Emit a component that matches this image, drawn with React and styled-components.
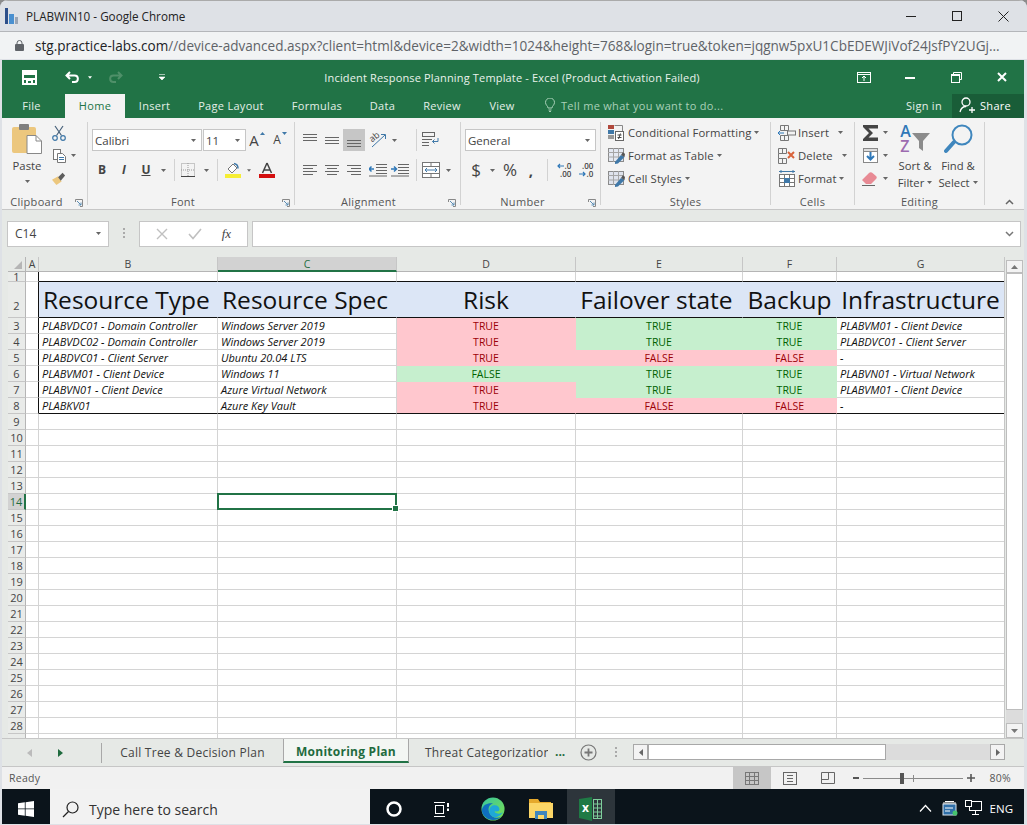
import React from 'react';
import styled, { createGlobalStyle } from 'styled-components';

const GREEN = '#217346';
const UI_FONT = '"Open Sans", "Noto Sans", sans-serif';

const GlobalStyle = createGlobalStyle`
  html, body { margin: 0; padding: 0; background: #8c8c8c; }
  body { width: 1027px; height: 825px; overflow: hidden; font-family: ${UI_FONT}; }
  * { box-sizing: border-box; }
`;

const Page = styled.div`
  width: 1027px;
  height: 825px;
  display: flex;
  flex-direction: column;
  overflow: hidden;
  border-radius: 8px 8px 0 0;
  background: #dee1e6;
`;

/* ── Chrome window ── */
const TitleBar = styled.div`
  height: 32px;
  flex: none;
  display: flex;
  align-items: center;
  padding: 0 1px 0 5px;
  background: #dee1e6;
  border-top: 1px solid #aaa;
  border-bottom: 1px solid #b4b6ba;
  color: #222;
  font-size: 11.7px;
  font-family: "Open Sans", sans-serif;
`;
const TitleText = styled.span`
  margin-left: 7px;
  flex: 1;
`;
const WinButton = styled.span`
  width: 46px;
  height: 30px;
  display: flex;
  align-items: center;
  justify-content: center;
`;
const UrlBar = styled.div`
  height: 27px;
  flex: none;
  display: flex;
  align-items: center;
  padding-left: 15px;
  gap: 11px;
  background: #f1f3f4;
  color: #5f6368;
  font-size: 13.55px;
  white-space: nowrap;
  overflow: hidden;
  b { font-weight: 400; color: #202124; }
`;

const ExcelFrame = styled.div`
  flex: none;
  height: 729px;
  margin: 1px 3px 0 2px;
  display: flex;
  flex-direction: column;
  background: #f3f3f3;
`;

/* ── Excel title + tabs ── */
const QatBar = styled.div`
  height: 34px;
  flex: none;
  display: flex;
  align-items: center;
  position: relative;
  background: ${GREEN};
  color: #fff;
`;
const QatSlot = styled.span`
  width: ${p => p.$w}px;
  flex: none;
  display: flex;
  align-items: center;
  justify-content: center;
`;
const DocTitle = styled.span`
  position: absolute;
  left: -2px;
  right: 0;
  top: 10px;
  text-align: center;
  font-size: 11px;
  letter-spacing: 0.16px;
  color: #e9f2ec;
  pointer-events: none;
`;
const TabBar = styled.div`
  height: 24px;
  flex: none;
  display: flex;
  align-items: stretch;
  background: ${GREEN};
  color: #e4efe8;
  font-size: 11px;
  letter-spacing: 0.3px;
`;
const RibbonTab = styled.span`
  width: ${p => p.$w}px;
  flex: none;
  display: flex;
  align-items: center;
  justify-content: center;
  padding-bottom: 2px;
  background: ${p => (p.$active ? '#f3f3f3' : 'transparent')};
  color: ${p => (p.$active ? GREEN : 'inherit')};
`;
const TellMe = styled.span`
  display: flex;
  align-items: center;
  gap: 6px;
  margin-left: 16px;
  padding-bottom: 2px;
  color: #a9d0b8;
`;
const SignIn = styled.span`
  margin-left: auto;
  margin-right: 10px;
  padding-bottom: 2px;
  align-self: center;
`;
const ShareBox = styled.span`
  width: 72px;
  display: flex;
  align-items: center;
  gap: 4px;
  padding: 0 0 2px 7px;
  background: #195d38;
  color: #fff;
`;

/* ── Ribbon ── */
const Ribbon = styled.div`
  height: 92px;
  flex: none;
  display: flex;
  padding-top: 4px;
  background: #f3f3f3;
  border-bottom: 1px solid #c6c6c6;
  color: #444;
  font-size: 11.3px;
  position: relative;
`;
const Group = styled.div`
  width: ${p => p.$w}px;
  height: 83px;
  flex: none;
  display: flex;
  flex-direction: column;
  border-right: 1px solid #d2d2d2;
  position: relative;
`;
const GroupBody = styled.div`
  flex: 1;
  display: flex;
  flex-direction: ${p => (p.$row ? 'row' : 'column')};
  padding: ${p => p.$pad || '7px 0 0 0'};
  gap: ${p => p.$gap || 0}px;
  min-height: 0;
  margin-top: ${p => (p.$pad ? -1 : 0)}px;
`;
const GroupLabel = styled.div`
  height: 16px;
  margin-bottom: -5px;
  text-align: center;
  line-height: 16px;
  font-size: 11px;
  letter-spacing: 0.3px;
  color: #555;
  padding-right: ${p => p.$shift || 0}px;
`;
const Launcher = styled.svg`
  position: absolute;
  right: 4px;
  bottom: -2px;
`;
const ToolRow = styled.div`
  height: ${p => p.$h || 22}px;
  flex: none;
  display: flex;
  align-items: center;
  padding-left: ${p => p.$left || 0}px;
  white-space: nowrap;
`;
const Slot = styled.span`
  width: ${p => p.$w}px;
  height: 22px;
  flex: none;
  display: flex;
  align-items: center;
  justify-content: center;
  background: ${p => (p.$active ? '#c6c6c6' : 'transparent')};
`;
const Combo = styled.span`
  width: ${p => p.$w}px;
  height: 22px;
  flex: none;
  display: flex;
  align-items: center;
  justify-content: space-between;
  padding: 0 5px 0 2px;
  margin-right: ${p => p.$gap || 0}px;
  background: #fff;
  border: 1px solid #c6c6c6;
  font-size: 11.5px;
`;
const VSep = styled.span`
  width: 1px;
  height: 22px;
  background: #d2d2d2;
`;
const ToolText = styled.span`
  margin: 0 ${p => p.$after || 3}px 0 ${p => p.$before || 2}px;
  letter-spacing: 0.1px;
`;
const Column = styled.div`
  width: ${p => p.$w}px;
  flex: none;
  display: flex;
  flex-direction: column;
  align-items: ${p => p.$align || 'center'};
`;
const BigIcon = styled.div`
  height: ${p => p.$h}px;
  display: flex;
  align-items: center;
  justify-content: center;
`;
const StackLine = styled.div`
  height: 17px;
  line-height: 17px;
  display: flex;
  align-items: center;
  gap: 3px;
  white-space: nowrap;
`;
const Collapse = styled.svg`
  position: absolute;
  left: 1003px;
  top: 81px;
`;
const GrowLetter = styled.span`
  display: inline-flex;
  align-items: flex-start;
  gap: 1px;
  font-size: ${p => p.$size}px;
  line-height: 16px;
`;
const SymbolText = styled.span`
  font-size: ${p => p.$size}px;
  font-weight: ${p => p.$weight || 400};
  line-height: 22px;
`;
const OrientWrap = styled.span`
  position: relative;
  width: 18px;
  height: 16px;
  display: block;
`;
const OrientText = styled.span`
  position: absolute;
  left: 0;
  top: 0;
  font-size: 9px;
  line-height: 10px;
  transform: rotate(-38deg);
`;
const DecimalStack = styled.span`
  display: flex;
  flex-direction: column;
  align-items: flex-end;
  font-size: 8px;
  line-height: 8px;
  font-weight: 600;
`;
const DecimalLine = styled.span`
  display: flex;
  align-items: center;
  gap: 1px;
`;
const SortWrap = styled.span`
  display: flex;
  align-items: flex-start;
`;
const SortLetters = styled.span`
  display: flex;
  flex-direction: column;
  font-size: 16px;
  line-height: 15px;
  font-weight: 600;
  color: #2f78b8;
  i { font-style: normal; color: #9c6bb0; }
`;
const SortFunnel = styled.svg`
  margin-top: 7px;
`;

/* ── Formula bar ── */
const FormulaBar = styled.div`
  height: 47px;
  flex: none;
  display: flex;
  align-items: center;
  padding: 0 3px 0 5px;
  background: #e6e9e6;
  font-size: 12px;
  color: #444;
`;
const NameBox = styled.div`
  width: 102px;
  height: 26px;
  display: flex;
  align-items: center;
  justify-content: space-between;
  padding: 0 7px;
  background: #fff;
  border: 1px solid #c6c6c6;
`;
const Grip = styled.div`
  width: 30px;
  display: flex;
  justify-content: center;
`;
const FxBox = styled.div`
  width: 109px;
  height: 26px;
  margin-right: 4px;
  display: flex;
  align-items: center;
  justify-content: space-around;
  padding: 0 6px;
  background: #fff;
  border: 1px solid #c6c6c6;
`;
const FxLabel = styled.i`
  font-family: "Liberation Serif", serif;
  font-size: 13px;
`;
const FormulaInput = styled.div`
  flex: 1;
  height: 26px;
  display: flex;
  align-items: center;
  justify-content: flex-end;
  padding-right: 6px;
  background: #fff;
  border: 1px solid #c6c6c6;
`;

/* ── Sheet grid ── */
const SheetArea = styled.div`
  flex: 1;
  min-height: 0;
  display: flex;
  padding-left: 6px;
  background: #e6e9e6;
  border-bottom: 1px solid #c6c6c6;
`;
const Grid = styled.div`
  width: 997px;
  flex: none;
  display: grid;
  grid-template-columns: 18px 13px 179px 179px 179px 167px 94px 168px;
  grid-template-rows: 15px 10px 36px repeat(27, 16px);
  overflow: hidden;
  background: #fff;
  border-right: 1px solid #c6c6c6;
  align-content: start;
`;
const Corner = styled.div`
  background: #e6e9e6;
  border-right: 1px solid #b5b5b5;
  border-bottom: 1px solid #b5b5b5;
  display: flex;
  align-items: flex-end;
  justify-content: flex-end;
  padding: 0 3px 2px 0;
`;
const ColHead = styled.div`
  display: flex;
  align-items: center;
  justify-content: center;
  font-size: 10.5px;
  color: ${p => (p.$selected ? '#1f6b3e' : '#444')};
  background: ${p => (p.$selected ? '#d2d2d2' : '#e6e9e6')};
  border-right: 1px solid #c6c6c6;
  border-bottom: ${p => (p.$selected ? `2px solid ${GREEN}` : '1px solid #b5b5b5')};
`;
const RowHead = styled.div`
  display: flex;
  align-items: ${p => (p.$tall ? 'flex-end' : 'center')};
  justify-content: center;
  padding-bottom: ${p => (p.$tall ? 5 : 0)}px;
  overflow: hidden;
  font-size: 11px;
  line-height: 12px;
  color: ${p => (p.$selected ? '#1f6b3e' : '#444')};
  background: ${p => (p.$selected ? '#d2d2d2' : '#e9ebe9')};
  border-right: ${p => (p.$selected ? `2px solid ${GREEN}` : '1px solid #b5b5b5')};
  border-bottom: 1px solid #c6c6c6;
`;
const Cell = styled.div`
  position: relative;
  display: flex;
  align-items: center;
  min-width: 0;
  white-space: nowrap;
  padding-left: 3px;
  background: ${p => p.$bg || '#fff'};
  border-right: 1px solid ${p => (p.$bg ? p.$bg : p.$rightBlack ? '#111' : '#d4d4d4')};
  border-bottom: 1px solid ${p => (p.$bottomBlack ? '#111' : p.$bg || '#d4d4d4')};
`;
const HeaderCell = styled(Cell)`
  justify-content: ${p => (p.$center ? 'center' : 'flex-start')};
  padding-left: ${p => (p.$center ? 0 : 4)}px;
  padding-right: ${p => p.$nudge || 0}px;
  font-family: "Open Sans", sans-serif;
  font-size: 24.5px;
  color: #111;
`;
const DataText = styled.span`
  font-family: "Open Sans", sans-serif;
  font-style: italic;
  font-size: 11px;
  color: #111;
`;
const BoolCell = styled(Cell)`
  justify-content: center;
  padding-left: 0;
  font-size: 10.5px;
  color: ${p => p.$fg};
`;
const SelectedCell = styled(Cell)`
  &::before {
    content: '';
    position: absolute;
    inset: -1px;
    border: 2px solid ${GREEN};
    z-index: 2;
  }
  &::after {
    content: '';
    position: absolute;
    right: -3px;
    bottom: -3px;
    width: 5px;
    height: 5px;
    background: ${GREEN};
    border: 1px solid #fff;
    z-index: 3;
  }
`;
const VScroll = styled.div`
  width: 17px;
  margin: 3px 0 0 1px;
  display: flex;
  flex-direction: column;
  background: #dcdcdc;
`;
const ScrollButton = styled.div`
  height: ${p => p.$h}px;
  flex: none;
  display: flex;
  align-items: center;
  justify-content: center;
  background: #f3f3f3;
  border: 1px solid #bdbdbd;
`;
const VThumb = styled.div`
  height: 437px;
  flex: none;
  background: #fff;
  border: 1px solid #bdbdbd;
`;
const VTrack = styled.div`
  flex: 1;
`;

/* ── Sheet tabs ── */
const SheetTabs = styled.div`
  height: 28px;
  flex: none;
  display: flex;
  align-items: stretch;
  background: #e6e9e6;
  border-bottom: 1px solid #c6c6c6;
  font-size: 12px;
  color: #444;
  letter-spacing: 0.25px;
`;
const TabNav = styled.div`
  width: 100px;
  flex: none;
  display: flex;
  align-items: center;
  padding-left: 25px;
  gap: 26px;
`;
const NavRule = styled.span`
  width: 1px;
  height: 20px;
  margin-left: auto;
  background: #a8a8a8;
`;
const SheetTab = styled.div`
  width: ${p => p.$w}px;
  height: 24px;
  flex: none;
  overflow: hidden;
  white-space: nowrap;
  display: flex;
  align-items: center;
  justify-content: ${p => (p.$clip ? 'flex-start' : 'center')};
  padding-left: ${p => (p.$clip ? 16 : 0)}px;
  padding-top: 3px;
  font-weight: ${p => (p.$active ? 700 : 400)};
  color: ${p => (p.$active ? '#1f6b3e' : '#444')};
  background: ${p => (p.$active ? '#f3f6f3' : 'transparent')};
  border-left: ${p => (p.$active ? '1px solid #a8a8a8' : '0')};
  border-right: ${p => (p.$active ? '1px solid #a8a8a8' : '0')};
  border-bottom: ${p => (p.$active ? `2px solid ${GREEN}` : '0')};
`;
const MoreTabs = styled.span`
  width: 22px;
  flex: none;
  align-self: center;
  margin-top: -3px;
  padding-left: 7px;
  color: #1f6b3e;
  font-weight: 700;
  letter-spacing: 0;
`;
const HScroll = styled.div`
  width: 372px;
  height: 16px;
  flex: none;
  align-self: center;
  margin: -1px 0 0 7px;
  display: flex;
  background: #dcdcdc;
`;
const HButton = styled.div`
  width: 15px;
  flex: none;
  display: flex;
  align-items: center;
  justify-content: center;
  background: #f3f3f3;
  border: 1px solid #a8a8a8;
`;
const HThumb = styled.div`
  width: 238px;
  flex: none;
  background: #fff;
  border: 1px solid #a8a8a8;
`;
const HTrack = styled.div`
  flex: 1;
`;

/* ── Status bar ── */
const StatusBar = styled.div`
  height: 22px;
  flex: none;
  display: flex;
  align-items: center;
  padding-left: 7px;
  background: #f1f1f1;
  font-size: 10.5px;
  letter-spacing: 0.3px;
  color: #555;
`;
const ViewButton = styled.span`
  width: 38px;
  height: 100%;
  flex: none;
  display: flex;
  align-items: center;
  justify-content: center;
  background: ${p => (p.$active ? '#c6c6c6' : 'transparent')};
`;
const ZoomTrack = styled.span`
  width: 100px;
  height: 1px;
  margin: 0 4px 0 3px;
  position: relative;
  background: #8a8a8a;
`;
const ZoomThumb = styled.span`
  position: absolute;
  left: 37px;
  top: -5px;
  width: 4px;
  height: 11px;
  background: #555;
`;
const ZoomTick = styled.span`
  position: absolute;
  left: 50px;
  top: -3px;
  width: 1px;
  height: 7px;
  background: #8a8a8a;
`;

/* ── Taskbar ── */
const Taskbar = styled.div`
  height: 35px;
  flex: none;
  margin: 0 3px 0 2px;
  display: flex;
  align-items: stretch;
  background: #0b141b;
  color: #fff;
`;
const TaskSlot = styled.span`
  width: ${p => p.$w}px;
  flex: none;
  display: flex;
  align-items: center;
  justify-content: center;
  padding-top: 5px;
  background: ${p => (p.$active ? '#2d353b' : 'transparent')};
`;
const SearchBox = styled.div`
  width: 320px;
  flex: none;
  display: flex;
  align-items: center;
  gap: 10px;
  padding: 5px 0 0 12px;
  background: #f2f2f2;
  color: #333;
  font-size: 14px;
`;
const Tray = styled.span`
  margin-left: auto;
  display: flex;
  align-items: center;
  padding: 3px 11px 0 0;
  font-size: 11.5px;
`;
const LogoWrap = styled.span`
  position: relative;
  width: 24px;
  height: 24px;
  display: block;
`;
const LogoLetter = styled.span`
  position: absolute;
  left: 3px;
  top: 3px;
  font-size: 12px;
  line-height: 16px;
  font-weight: 700;
  color: #fff;
`;

/* ── Small drawings ── */
const Caret = ({ color = '#666' }) => (
  <svg width="5" height="3" viewBox="0 0 5 3"><path d="M0 0h5L2.500 3z" fill={color} /></svg>
);
const Lines = ({ rows, color = '#666' }) => (
  <svg width="16" height="14" viewBox="0 0 16 14" fill="none" stroke={color}>
    {rows.map(([x1, x2, y]) => <path key={y} d={`M${x1} ${y}.5H${x2}`} />)}
  </svg>
);
const LauncherIcon = () => (
  <Launcher width="8" height="8" viewBox="0 0 8 8" fill="none" stroke="#888">
    <path d="M0.500 3V0.500H7.500V7.500H5" />
    <path d="M2 2L6 6M6 3.500V6H3.500" stroke="#5b8db5" />
  </Launcher>
);
const SaveIcon = () => (
  <svg width="15" height="15" viewBox="0 0 15 15">
    <path d="M0 0H15V15H0z" fill="#fff" />
    <rect x="2" y="5" width="11" height="3" fill="#217346" />
    <rect x="2" y="10" width="2" height="3" fill="#217346" />
    <rect x="11" y="10" width="2" height="3" fill="#217346" />
    <rect x="6" y="11" width="3" height="2" fill="#217346" />
  </svg>
);
const PasteIcon = () => (
  <svg width="30" height="32" viewBox="0 0 30 32">
    <rect x="0" y="4" width="24" height="26" rx="2" fill="#ecc77e" />
    <rect x="7" y="1" width="10" height="6" rx="1" fill="#7f7f7f" />
    <path d="M15 12.500H24L29.500 18V30.500H15z" fill="#fff" stroke="#888" />
    <path d="M24 12.500V18H29.500" fill="none" stroke="#888" />
  </svg>
);
const CutIcon = () => (
  <svg width="14" height="16" viewBox="0 0 14 16" fill="none" stroke="#47617a" strokeWidth="1.200">
    <path d="M3 1L9.500 10.500M11 1L4.500 10.500" />
    <circle cx="3" cy="13" r="2.300" stroke="#3f78a8" />
    <circle cx="11" cy="13" r="2.300" stroke="#3f78a8" />
  </svg>
);
const CopyIcon = () => (
  <svg width="13" height="14" viewBox="0 0 13 14" fill="#fff" stroke="#777">
    <rect x="0.500" y="0.500" width="7" height="10" />
    <path d="M4.500 4.500H9.500L12.500 7.500V13.500H4.500z" />
    <path d="M6 8.500H11M6 10.500H11" fill="none" stroke="#3f78a8" />
  </svg>
);
const PainterIcon = () => (
  <svg width="16" height="15" viewBox="0 0 16 15">
    <path d="M0 9L7 5L11 11L5 15z" fill="#ecc77e" />
    <path d="M7 6L10 10L15 4L12 1z" fill="#5d5d5d" />
  </svg>
);
const GrowA = ({ size, down }) => (
  <GrowLetter $size={size}>
    A
    <svg width="5" height="3" viewBox="0 0 5 3">
      <path d={down ? 'M0 0H5L2.500 3z' : 'M0 3L2.500 0L5 3z'} fill="#3f78a8" />
    </svg>
  </GrowLetter>
);
const BordersIcon = () => (
  <svg width="14" height="14" viewBox="0 0 14 14" fill="none" stroke="#999" strokeDasharray="1 1">
    <rect x="0.500" y="0.500" width="13" height="13" />
    <path d="M7 0V14M0 7H14" />
    <path d="M0 13.500H14" stroke="#444" strokeDasharray="none" />
  </svg>
);
const FillIcon = () => (
  <svg width="16" height="16" viewBox="0 0 16 16">
    <path d="M3 7L8 2L12 6L7 11z" fill="#fff" stroke="#777" />
    <path d="M9 1.500C12 2 13 4 13 6.500" fill="none" stroke="#3f78a8" strokeWidth="1.500" />
    <rect x="0" y="12" width="16" height="4" fill="#f6ee34" />
  </svg>
);
const FontColorIcon = () => (
  <svg width="16" height="16" viewBox="0 0 16 16">
    <path d="M8 1L3.500 11M8 1L12.500 11M5 8H11" stroke="#444" strokeWidth="1.500" fill="none" />
    <rect x="0" y="12" width="16" height="4" fill="#d40f0f" />
  </svg>
);
const OrientIcon = () => (
  <OrientWrap>
    <OrientText>ab</OrientText>
    <svg width="18" height="16" viewBox="0 0 18 16" fill="none" stroke="#3f78a8">
      <path d="M3 15L16 3M12 2.500H16.500V7" />
    </svg>
  </OrientWrap>
);
const WrapIcon = () => (
  <svg width="18" height="16" viewBox="0 0 18 16" fill="none" stroke="#666">
    <rect x="0.500" y="0.500" width="12" height="4" />
    <path d="M0 7.500H10M0 10.500H7M0 13.500H7" />
    <path d="M16 6V9.500H10.500M12.500 7.500L10.500 9.500L12.500 11.500" stroke="#3f78a8" />
  </svg>
);
const MergeIcon = () => (
  <svg width="18" height="16" viewBox="0 0 18 16" fill="#fff" stroke="#777">
    <rect x="0.500" y="0.500" width="17" height="15" />
    <path d="M0 4.500H18M0 11.500H18M9 0V4M9 12V16" />
    <path d="M3 8H15M5 6L3 8L5 10M13 6L15 8L13 10" fill="none" stroke="#3f78a8" />
  </svg>
);
const IndentIcon = ({ flip }) => (
  <svg width="18" height="14" viewBox="0 0 18 14" fill="none" stroke="#666">
    <path d="M7 1.500H18M7 4.500H18M7 7.500H18M7 10.500H18M0 13H18" />
    <path d={flip ? 'M0 6H5M3 3.500L5.500 6L3 8.500' : 'M5 6H0M2.500 3.500L0 6L2.500 8.500'} stroke="#2f78b8" strokeWidth="1.500" />
  </svg>
);
const DecimalArrow = ({ left }) => (
  <svg width="7" height="6" viewBox="0 0 7 6" fill="none" stroke="#2f78b8" strokeWidth="1.200">
    <path d={left ? 'M7 3H1M3 1L1 3L3 5' : 'M0 3H6M4 1L6 3L4 5'} />
  </svg>
);
const DecimalIcon = ({ left }) => (
  <DecimalStack>
    {left ? (
      <>
        <DecimalLine><DecimalArrow left />.0</DecimalLine>
        <DecimalLine>.00</DecimalLine>
      </>
    ) : (
      <>
        <DecimalLine>.00</DecimalLine>
        <DecimalLine><DecimalArrow />.0</DecimalLine>
      </>
    )}
  </DecimalStack>
);
const CondIcon = () => (
  <svg width="16" height="16" viewBox="0 0 16 16">
    <rect x="0" y="0" width="6" height="4" fill="#b0483c" />
    <rect x="0" y="5" width="6" height="4" fill="#3f78a8" />
    <rect x="0" y="10" width="6" height="4" fill="#999" />
    <path d="M6.500 0.500H14.500V6" fill="none" stroke="#888" />
    <rect x="7.500" y="6.500" width="8" height="9" fill="#fff" stroke="#666" />
    <path d="M9.500 10H13.500M9.500 12.500H13.500M12.500 8.500L10.500 14" stroke="#444" fill="none" />
  </svg>
);
const TableIcon = ({ fill }) => (
  <svg width="17" height="16" viewBox="0 0 17 16">
    <rect x="0.500" y="0.500" width="15" height="13" fill={fill} stroke="#8a8a8a" />
    <path d="M0 4.500H16M0 9H16M5.500 0V14M10.500 0V14" stroke="#a5a5a5" />
    <path d="M7 14L13 7L16.500 9L10 15.500L7 16z" fill="#3f78a8" />
    <path d="M13 7L15 4L17 6L16.500 9z" fill="#555" />
  </svg>
);
const InsertIcon = () => (
  <svg width="18" height="16" viewBox="0 0 18 16" fill="none" stroke="#777">
    <path d="M2.500 0.500H10.500V5.500H2.500zM6.500 0.500V5.500M2.500 10.500H10.500V15.500H2.500zM6.500 10.500V15.500" />
    <rect x="9.500" y="6" width="8" height="4" fill="#f3f3f3" />
    <path d="M0 8H6M4 6L6 8L4 10" stroke="#2f78b8" transform="rotate(180 3 8)" />
  </svg>
);
const DeleteIcon = () => (
  <svg width="18" height="16" viewBox="0 0 18 16" fill="none" stroke="#777">
    <path d="M0.500 0.500H8.500V5.500H0.500zM4.500 0.500V5.500M0.500 10.500H8.500V15.500H0.500zM4.500 10.500V15.500M0.500 5.500V10.500" />
    <path d="M10 4L16 10M16 4L10 10" stroke="#d8633a" strokeWidth="2" />
  </svg>
);
const FormatIcon = () => (
  <svg width="18" height="17" viewBox="0 0 18 17" fill="none" stroke="#777">
    <rect x="1.500" y="4.500" width="15" height="12" fill="#fff" />
    <path d="M1 8.500H17M1 12.500H17M6.500 4V17M11.500 4V17" />
    <rect x="6" y="8" width="6" height="5" fill="#3f78a8" stroke="none" />
    <path d="M1 1.500H17M3 0V3M15 0V3" stroke="#3f78a8" />
  </svg>
);
const SumIcon = () => (
  <svg width="17" height="16" viewBox="0 0 17 16">
    <path d="M1 0H16V3.500H6.500L11 8L6.500 12.500H16V16H1V14L7 8L1 2z" fill="#444" />
  </svg>
);
const FillDownIcon = () => (
  <svg width="15" height="15" viewBox="0 0 15 15">
    <rect x="0.500" y="0.500" width="14" height="14" fill="#fff" stroke="#888" />
    <rect x="0.500" y="0.500" width="14" height="3" fill="#ddd" stroke="#888" />
    <path d="M7.500 4V11M4 8L7.500 11.500L11 8" fill="none" stroke="#2f78b8" strokeWidth="2" />
  </svg>
);
const EraserIcon = () => (
  <svg width="16" height="14" viewBox="0 0 16 14">
    <path d="M0 8L7 1C8 0 9.500 0 10.500 1L14 4C15 5 15 6 14 7L9 12H4z" fill="#e88a94" />
    <path d="M0 13.500H13" stroke="#666" />
  </svg>
);
const SortIcon = () => (
  <SortWrap>
    <SortLetters>A<i>Z</i></SortLetters>
    <SortFunnel width="19" height="20" viewBox="0 0 19 20">
      <path d="M1 2H19L12 10V20L8 17V10z" fill="#8b8b8b" />
    </SortFunnel>
  </SortWrap>
);
const FindIcon = () => (
  <svg width="29" height="30" viewBox="0 0 29 30" fill="none" stroke="#3f86bd">
    <circle cx="18" cy="11" r="9.500" strokeWidth="2" />
    <path d="M10 18L2 27" strokeWidth="4" strokeLinecap="round" />
  </svg>
);
const EdgeIcon = () => (
  <svg width="24" height="24" viewBox="0 0 26 26">
    <defs>
      <linearGradient id="edgeTop" x1="0" y1="0" x2="1" y2="1">
        <stop offset="0" stopColor="#37c6a0" />
        <stop offset="1" stopColor="#7ce04c" />
      </linearGradient>
    </defs>
    <circle cx="13" cy="13" r="12.500" fill="url(#edgeTop)" />
    <path d="M1 14C2 8 8 6 13 7C9 8 7 12 9 17C11 22 17 24 22 21C18 26 9 26 5 22C2 19 1 17 1 14z" fill="#0f6ebd" />
    <path d="M9 15C9 11 12 9 15 9C18 9 20 11 20 13.500C20 15 18 16 15 15.500C14 17 18 19 22 17.500C24.500 16.500 25 14 25 13C24 19 18 23 13 21.500C10 20.500 9 18 9 15z" fill="#1fa8d8" />
  </svg>
);
const FolderIcon = () => (
  <svg width="24" height="20" viewBox="0 0 24 20">
    <path d="M0 0H9L11 3H22V19H0z" fill="#e5a92c" />
    <rect x="0" y="4" width="24" height="15" fill="#fbd667" />
    <rect x="6" y="12" width="12" height="8" fill="#3f86bd" />
    <rect x="9" y="16" width="6" height="4" fill="#fbd667" />
  </svg>
);
const ExcelLogo = () => (
  <LogoWrap>
    <svg width="24" height="24" viewBox="0 0 24 24">
      <path d="M0 2L13 0V24L0 21z" fill="#1f7a45" />
      <rect x="14.500" y="2.500" width="8" height="19" fill="none" stroke="#7fcf9c" />
      <path d="M14 7H23M14 11H23M14 15H23M14 19H23M18.500 2V22" stroke="#7fcf9c" />
    </svg>
    <LogoLetter>x</LogoLetter>
  </LogoWrap>
);

const dataRows = [
  ['PLABVDC01 - Domain Controller', 'Windows Server 2019', true, true, true, 'PLABVM01 - Client Device'],
  ['PLABVDC02 - Domain Controller', 'Windows Server 2019', true, true, true, 'PLABDVC01 - Client Server'],
  ['PLABDVC01 - Client Server', 'Ubuntu 20.04 LTS', true, false, false, '-'],
  ['PLABVM01 - Client Device', 'Windows 11', false, true, true, 'PLABVN01 - Virtual Network'],
  ['PLABVN01 - Client Device', 'Azure Virtual Network', true, true, true, 'PLABVM01 - Client Device'],
  ['PLABKV01', 'Azure Key Vault', true, false, false, '-'],
];
const columns = ['A', 'B', 'C', 'D', 'E', 'F', 'G'];
const RED = { bg: '#ffc7ce', fg: '#9c0006' };
const OK = { bg: '#c6efce', fg: '#006100' };

const SheetGrid = () => {
  const emptyRows = [];
  for (let n = 9; n <= 29; n++) emptyRows.push(n);
  return (
    <Grid>
      <Corner>
        <svg width="8" height="8" viewBox="0 0 8 8"><path d="M8 0V8H0z" fill="#b5b5b5" /></svg>
      </Corner>
      {columns.map(c => <ColHead key={c} $selected={c === 'C'}>{c}</ColHead>)}

      <RowHead>1</RowHead>
      <Cell $rightBlack />
      {columns.slice(1).map(c => <Cell key={c} $bottomBlack />)}

      <RowHead $tall>2</RowHead>
      <Cell $rightBlack />
      <HeaderCell $bg="#dce6f6" $bottomBlack>Resource Type</HeaderCell>
      <HeaderCell $bg="#dce6f6" $bottomBlack>Resource Spec</HeaderCell>
      <HeaderCell $bg="#dce6f6" $bottomBlack $center>Risk</HeaderCell>
      <HeaderCell $bg="#dce6f6" $bottomBlack $center $nudge={5}>Failover state</HeaderCell>
      <HeaderCell $bg="#dce6f6" $bottomBlack $center>Backup</HeaderCell>
      <HeaderCell $bg="#dce6f6" $bottomBlack $center>Infrastructure</HeaderCell>

      {dataRows.map((row, i) => {
        const last = i === dataRows.length - 1;
        // risk is good when false, failover and backup are good when true
        const risk = row[2] ? RED : OK;
        const failover = row[3] ? OK : RED;
        const backup = row[4] ? OK : RED;
        return (
          <React.Fragment key={row[0]}>
            <RowHead>{i + 3}</RowHead>
            <Cell $rightBlack />
            <Cell $bottomBlack={last}><DataText>{row[0]}</DataText></Cell>
            <Cell $bottomBlack={last}><DataText>{row[1]}</DataText></Cell>
            <BoolCell $bg={risk.bg} $fg={risk.fg} $bottomBlack={last}>{row[2] ? 'TRUE' : 'FALSE'}</BoolCell>
            <BoolCell $bg={failover.bg} $fg={failover.fg} $bottomBlack={last}>{row[3] ? 'TRUE' : 'FALSE'}</BoolCell>
            <BoolCell $bg={backup.bg} $fg={backup.fg} $bottomBlack={last}>{row[4] ? 'TRUE' : 'FALSE'}</BoolCell>
            <Cell $bottomBlack={last}><DataText>{row[5]}</DataText></Cell>
          </React.Fragment>
        );
      })}

      {emptyRows.map(n => (
        <React.Fragment key={n}>
          <RowHead $selected={n === 14}>{n}</RowHead>
          {columns.map(c => (
            c === 'C' && n === 14 ? <SelectedCell key={c} /> : <Cell key={c} />
          ))}
        </React.Fragment>
      ))}
    </Grid>
  );
};

const App = () => (
  <Page>
    <GlobalStyle />
    <TitleBar>
      <svg width="14" height="16" viewBox="0 0 14 16">
        <rect x="0" y="0" width="3" height="16" fill="#2d4f8a" />
        <rect x="4" y="6" width="5" height="10" fill="#4a90d0" />
        <rect x="10" y="9" width="3" height="7" fill="#9aa5b5" />
      </svg>
      <TitleText>PLABWIN10 - Google Chrome</TitleText>
      <WinButton>
        <svg width="10" height="10" viewBox="0 0 10 10"><path d="M0 5.500H10" stroke="#222" /></svg>
      </WinButton>
      <WinButton>
        <svg width="10" height="10" viewBox="0 0 10 10"><rect x="0.500" y="0.500" width="9" height="9" fill="none" stroke="#222" /></svg>
      </WinButton>
      <WinButton>
        <svg width="11" height="11" viewBox="0 0 11 11"><path d="M0.500 0.500L10.500 10.500M10.500 0.500L0.500 10.500" stroke="#222" /></svg>
      </WinButton>
    </TitleBar>
    <UrlBar>
      <svg width="9" height="11" viewBox="0 0 9 11">
        <rect x="0" y="4" width="9" height="7" rx="1" fill="#5f6368" />
        <path d="M2 4V3a2.500 2.500 0 0 1 5 0V4" fill="none" stroke="#5f6368" />
      </svg>
      <span><b>stg.practice-labs.com</b>//device-advanced.aspx?client=html&amp;device=2&amp;width=1024&amp;height=768&amp;login=true&amp;token=jqgnw5pxU1CbEDEWJiVof24JsfPY2UGj...</span>
    </UrlBar>

    <ExcelFrame>
      <QatBar>
        <QatSlot $w={54}><SaveIcon /></QatSlot>
        <QatSlot $w={32}>
          <svg width="15" height="12" viewBox="0 0 15 12" fill="none" stroke="#fff" strokeWidth="2">
            <path d="M5 1L1.500 4.500L5 8M2 4.500H9.500C14 4.500 14 11 9.500 11H7" />
          </svg>
        </QatSlot>
        <QatSlot $w={4}><Caret color="#fff" /></QatSlot>
        <QatSlot $w={4} />
        <QatSlot $w={38}>
          <svg width="15" height="12" viewBox="0 0 15 12" fill="none" stroke="#4f9069" strokeWidth="2">
            <path d="M10 1L13.500 4.500L10 8M13 4.500H5.500C1 4.500 1 11 5.500 11H8" />
          </svg>
        </QatSlot>
        <QatSlot $w={0}><Caret color="#4f9069" /></QatSlot>
        <QatSlot $w={56}>
          <svg width="6" height="6" viewBox="0 0 6 6"><path d="M0 0.500H6M0 3H6L3 6z" fill="#fff" stroke="#fff" strokeWidth="0.600" /></svg>
        </QatSlot>
        <DocTitle>Incident Response Planning Template - Excel (Product Activation Failed)</DocTitle>
        <QatSlot $w={651} />
        <QatSlot $w={46}>
          <svg width="14" height="11" viewBox="0 0 14 11" fill="none" stroke="#fff">
            <rect x="0.500" y="0.500" width="13" height="10" />
            <path d="M0 2.500H14" />
            <path d="M7 9V4.500M5 6L7 4L9 6" />
          </svg>
        </QatSlot>
        <QatSlot $w={46}>
          <svg width="10" height="3" viewBox="0 0 10 3"><rect width="10" height="2" y="1" fill="#fff" /></svg>
        </QatSlot>
        <QatSlot $w={47}>
          <svg width="11" height="11" viewBox="0 0 11 11" fill="none" stroke="#fff">
            <path d="M2.500 2.500V0.500H10.500V7.500H8.500" />
            <rect x="0.500" y="2.500" width="8" height="8" />
            <path d="M0.500 3.500H8.500" />
          </svg>
        </QatSlot>
        <QatSlot $w={44}>
          <svg width="10" height="10" viewBox="0 0 10 10"><path d="M1 1L9 9M9 1L1 9" stroke="#fff" strokeWidth="2" /></svg>
        </QatSlot>
      </QatBar>

      <TabBar>
        <RibbonTab $w={59}>File</RibbonTab>
        <RibbonTab $w={4} />
        <RibbonTab $w={60} $active>Home</RibbonTab>
        <RibbonTab $w={59}>Insert</RibbonTab>
        <RibbonTab $w={94}>Page Layout</RibbonTab>
        <RibbonTab $w={78}>Formulas</RibbonTab>
        <RibbonTab $w={53}>Data</RibbonTab>
        <RibbonTab $w={66}>Review</RibbonTab>
        <RibbonTab $w={54}>View</RibbonTab>
        <TellMe>
          <svg width="10" height="14" viewBox="0 0 10 14" fill="none" stroke="#a9d0b8">
            <path d="M3 10C3 8 0.500 7 0.500 4.500a4.500 4.500 0 0 1 9 0C9.500 7 7 8 7 10zM3.500 12H6.500M4 13.500H6" />
          </svg>
          Tell me what you want to do...
        </TellMe>
        <SignIn>Sign in</SignIn>
        <ShareBox>
          <svg width="17" height="16" viewBox="0 0 17 16" fill="none" stroke="#fff" strokeWidth="1.300">
            <circle cx="7" cy="5" r="4" />
            <path d="M1 15C2 11 4 9.500 7 9.500M10 13H16M13 10V16" />
          </svg>
          Share
        </ShareBox>
      </TabBar>

      <Ribbon>
        <Group $w={86}>
          <GroupBody $row $pad="0">
            <Column $w={50}>
              <BigIcon $h={36}><PasteIcon /></BigIcon>
              <StackLine>Paste</StackLine>
              <BigIcon $h={14}><Caret /></BigIcon>
            </Column>
            <Column $w={35} $align="flex-start">
              <ToolRow $h={23}><Slot $w={14}><CutIcon /></Slot></ToolRow>
              <ToolRow $h={23}><Slot $w={14}><CopyIcon /></Slot><Slot $w={14}><Caret /></Slot></ToolRow>
              <ToolRow $h={23}><Slot $w={14}><PainterIcon /></Slot></ToolRow>
            </Column>
          </GroupBody>
          <GroupLabel $shift={16}>Clipboard</GroupLabel>
          <LauncherIcon />
        </Group>

        <Group $w={207}>
          <GroupBody $gap={8}>
            <ToolRow $left={4}>
              <Combo $w={110} $gap={1}>Calibri<Caret /></Combo>
              <Combo $w={43}>11<Caret /></Combo>
              <Slot $w={22}><GrowA size={15} /></Slot>
              <Slot $w={24}><GrowA size={12} down /></Slot>
            </ToolRow>
            <ToolRow $left={3}>
              <Slot $w={22}><SymbolText $size={12} $weight={700}>B</SymbolText></Slot>
              <Slot $w={22}><SymbolText $size={12} $weight={700}><i>I</i></SymbolText></Slot>
              <Slot $w={22}><SymbolText $size={12} $weight={700}><u>U</u></SymbolText></Slot>
              <Slot $w={12}><Caret /></Slot>
              <Slot $w={10}><VSep /></Slot>
              <Slot $w={18}><BordersIcon /></Slot>
              <Slot $w={18}><Caret /></Slot>
              <Slot $w={4}><VSep /></Slot>
              <Slot $w={28}><FillIcon /></Slot>
              <Slot $w={4}><Caret /></Slot>
              <Slot $w={32}><FontColorIcon /></Slot>
              <Slot $w={0}><Caret /></Slot>
            </ToolRow>
          </GroupBody>
          <GroupLabel $shift={16}>Font</GroupLabel>
          <LauncherIcon />
        </Group>

        <Group $w={166}>
          <GroupBody $gap={8}>
            <ToolRow $left={4}>
              <Slot $w={22}><Lines rows={[[1, 15, 1], [1, 15, 4], [1, 15, 7]]} /></Slot>
              <Slot $w={22}><Lines rows={[[1, 15, 4], [1, 15, 7], [1, 15, 10]]} /></Slot>
              <Slot $w={22} $active><Lines rows={[[1, 15, 7], [1, 15, 10], [1, 15, 13]]} /></Slot>
              <Slot $w={26}><OrientIcon /></Slot>
              <Slot $w={6}><Caret /></Slot>
              <Slot $w={18} />
              <Slot $w={2}><VSep /></Slot>
              <Slot $w={3} />
              <Slot $w={22}><WrapIcon /></Slot>
            </ToolRow>
            <ToolRow $left={4}>
              <Slot $w={22}><Lines rows={[[1, 15, 2], [1, 11, 5], [1, 15, 8], [1, 11, 11]]} /></Slot>
              <Slot $w={22}><Lines rows={[[1, 15, 2], [3, 13, 5], [1, 15, 8], [3, 13, 11]]} /></Slot>
              <Slot $w={22}><Lines rows={[[1, 15, 2], [5, 15, 5], [1, 15, 8], [5, 15, 11]]} /></Slot>
              <Slot $w={2} />
              <Slot $w={22}><IndentIcon /></Slot>
              <Slot $w={22}><IndentIcon flip /></Slot>
              <Slot $w={4} />
              <Slot $w={2}><VSep /></Slot>
              <Slot $w={3} />
              <Slot $w={22}><MergeIcon /></Slot>
              <Slot $w={12}><Caret /></Slot>
            </ToolRow>
          </GroupBody>
          <GroupLabel $shift={18}>Alignment</GroupLabel>
          <LauncherIcon />
        </Group>

        <Group $w={140}>
          <GroupBody $gap={8}>
            <ToolRow $left={4}>
              <Combo $w={131}>General<Caret /></Combo>
            </ToolRow>
            <ToolRow $left={4}>
              <Slot $w={22}><SymbolText $size={17}>$</SymbolText></Slot>
              <Slot $w={10}><Caret /></Slot>
              <Slot $w={2} />
              <Slot $w={22}><SymbolText $size={17}>%</SymbolText></Slot>
              <Slot $w={20}><SymbolText $size={15} $weight={700}>,</SymbolText></Slot>
              <Slot $w={5} />
              <Slot $w={2}><VSep /></Slot>
              <Slot $w={5} />
              <Slot $w={22}><DecimalIcon left /></Slot>
              <Slot $w={22}><DecimalIcon /></Slot>
            </ToolRow>
          </GroupBody>
          <GroupLabel $shift={16}>Number</GroupLabel>
          <LauncherIcon />
        </Group>

        <Group $w={170}>
          <GroupBody $pad="0">
            <ToolRow $h={23} $left={5}><Slot $w={20}><CondIcon /></Slot><ToolText>Conditional Formatting</ToolText><Caret /></ToolRow>
            <ToolRow $h={23} $left={5}><Slot $w={20}><TableIcon fill="#e4e9f2" /></Slot><ToolText>Format as Table</ToolText><Caret /></ToolRow>
            <ToolRow $h={23} $left={5}><Slot $w={20}><TableIcon fill="#dfe3ec" /></Slot><ToolText>Cell Styles</ToolText><Caret /></ToolRow>
          </GroupBody>
          <GroupLabel>Styles</GroupLabel>
        </Group>

        <Group $w={84}>
          <GroupBody $pad="0">
            <ToolRow $h={23} $left={6}><Slot $w={20}><InsertIcon /></Slot><ToolText $before={1} $after={9}>Insert</ToolText><Caret /></ToolRow>
            <ToolRow $h={23} $left={6}><Slot $w={20}><DeleteIcon /></Slot><ToolText $before={1} $after={9}>Delete</ToolText><Caret /></ToolRow>
            <ToolRow $h={23} $left={6}><Slot $w={20}><FormatIcon /></Slot><ToolText $before={1} $after={2}>Format</ToolText><Caret /></ToolRow>
          </GroupBody>
          <GroupLabel>Cells</GroupLabel>
        </Group>

        <Group $w={130}>
          <GroupBody $row $pad="0">
            <Column $w={37} $align="flex-start">
              <ToolRow $h={23} $left={5}><Slot $w={20}><SumIcon /></Slot><Slot $w={10}><Caret /></Slot></ToolRow>
              <ToolRow $h={23} $left={5}><Slot $w={20}><FillDownIcon /></Slot><Slot $w={10}><Caret /></Slot></ToolRow>
              <ToolRow $h={23} $left={5}><Slot $w={20}><EraserIcon /></Slot><Slot $w={10}><Caret /></Slot></ToolRow>
            </Column>
            <Column $w={46}>
              <BigIcon $h={36}><SortIcon /></BigIcon>
              <StackLine>Sort &amp;</StackLine>
              <StackLine>Filter <Caret /></StackLine>
            </Column>
            <Column $w={40}>
              <BigIcon $h={36}><FindIcon /></BigIcon>
              <StackLine>Find &amp;</StackLine>
              <StackLine>Select <Caret /></StackLine>
            </Column>
          </GroupBody>
          <GroupLabel>Editing</GroupLabel>
        </Group>

        <Collapse width="9" height="6" viewBox="0 0 9 6" fill="none" stroke="#666" strokeWidth="1.500">
          <path d="M1 5L4.500 1.500L8 5" />
        </Collapse>
      </Ribbon>

      <FormulaBar>
        <NameBox>C14<Caret /></NameBox>
        <Grip>
          <svg width="3" height="11" viewBox="0 0 3 11" fill="#aaa">
            <rect y="0" width="2" height="2" /><rect y="4" width="2" height="2" /><rect y="8" width="2" height="2" />
          </svg>
        </Grip>
        <FxBox>
          <svg width="12" height="12" viewBox="0 0 12 12"><path d="M1 1L11 11M11 1L1 11" stroke="#c0c0c0" strokeWidth="1.400" /></svg>
          <svg width="14" height="12" viewBox="0 0 14 12"><path d="M1 6L5 10.500L13 1" fill="none" stroke="#c0c0c0" strokeWidth="1.600" /></svg>
          <FxLabel>fx</FxLabel>
        </FxBox>
        <FormulaInput>
          <svg width="9" height="6" viewBox="0 0 9 6" fill="none" stroke="#777" strokeWidth="1.500"><path d="M1 1L4.500 4.500L8 1" /></svg>
        </FormulaInput>
      </FormulaBar>

      <SheetArea>
        <SheetGrid />
        <VScroll>
          <ScrollButton $h={13}><svg width="7" height="4" viewBox="0 0 7 4"><path d="M0 4L3.500 0L7 4z" fill="#777" /></svg></ScrollButton>
          <VThumb />
          <VTrack />
          <ScrollButton $h={15}><svg width="7" height="4" viewBox="0 0 7 4"><path d="M0 0L3.500 4L7 0z" fill="#777" /></svg></ScrollButton>
        </VScroll>
      </SheetArea>

      <SheetTabs>
        <TabNav>
          <svg width="5" height="8" viewBox="0 0 5 8"><path d="M5 0V8L0 4z" fill="#bbb" /></svg>
          <svg width="5" height="8" viewBox="0 0 5 8"><path d="M0 0V8L5 4z" fill="#1f6b3e" /></svg>
          <NavRule />
        </TabNav>
        <SheetTab $w={181}>Call Tree &amp; Decision Plan</SheetTab>
        <SheetTab $w={126} $active>Monitoring Plan</SheetTab>
        <SheetTab $w={139} $clip>Threat Categorization</SheetTab>
        <MoreTabs>...</MoreTabs>
        <QatSlot $w={36}>
          <svg width="17" height="17" viewBox="0 0 17 17" fill="none" stroke="#777" strokeWidth="1.200">
            <circle cx="8.500" cy="8.500" r="7.500" />
            <path d="M4.500 8.500H12.500M8.500 4.500V12.500" strokeWidth="1.800" />
          </svg>
        </QatSlot>
        <QatSlot $w={20}>
          <svg width="3" height="11" viewBox="0 0 3 11" fill="#aaa">
            <rect y="0" width="2" height="2" /><rect y="4" width="2" height="2" /><rect y="8" width="2" height="2" />
          </svg>
        </QatSlot>
        <HScroll>
          <HButton><svg width="4" height="7" viewBox="0 0 4 7"><path d="M4 0V7L0 3.500z" fill="#666" /></svg></HButton>
          <HThumb />
          <HTrack />
          <HButton><svg width="4" height="7" viewBox="0 0 4 7"><path d="M0 0V7L4 3.500z" fill="#666" /></svg></HButton>
        </HScroll>
      </SheetTabs>

      <StatusBar>
        Ready
        <QatSlot $w={693} />
        <ViewButton $active>
          <svg width="14" height="13" viewBox="0 0 14 13" fill="none" stroke="#777">
            <rect x="0.500" y="0.500" width="13" height="12" />
            <path d="M0 4.500H14M0 8.500H14M4.500 0V13M9.500 0V13" />
          </svg>
        </ViewButton>
        <ViewButton>
          <svg width="14" height="13" viewBox="0 0 14 13" fill="none" stroke="#666">
            <rect x="0.500" y="0.500" width="13" height="12" />
            <path d="M4 3.500H10M4 6.500H10M4 9.500H10" />
          </svg>
        </ViewButton>
        <ViewButton>
          <svg width="14" height="12" viewBox="0 0 14 12" fill="none" stroke="#666">
            <path d="M0.500 0.500H13.500V11.500H0.500zM0.500 7.500H7.500V0.500" />
          </svg>
        </ViewButton>
        <QatSlot $w={5} />
        <QatSlot $w={8}><svg width="6" height="2" viewBox="0 0 6 2"><rect width="6" height="2" fill="#555" /></svg></QatSlot>
        <ZoomTrack><ZoomThumb /><ZoomTick /></ZoomTrack>
        <QatSlot $w={8}>
          <svg width="8" height="8" viewBox="0 0 8 8"><path d="M0 4H8M4 0V8" stroke="#555" strokeWidth="1.600" /></svg>
        </QatSlot>
        <QatSlot $w={14} />
        80%
      </StatusBar>
    </ExcelFrame>

    <Taskbar>
      <TaskSlot $w={48}>
        <svg width="16" height="16" viewBox="0 0 16 16" fill="#fff">
          <path d="M0 2.200L6.800 1.300V7.500H0zM7.600 1.200L16 0V7.500H7.600zM0 8.300H6.800V14.700L0 13.800zM7.600 8.300H16V16L7.600 14.800z" />
        </svg>
      </TaskSlot>
      <SearchBox>
        <svg width="17" height="17" viewBox="0 0 17 17" fill="none" stroke="#222" strokeWidth="1.200">
          <circle cx="10.500" cy="6.500" r="5.500" />
          <path d="M6.500 10.500L1 16" />
        </svg>
        Type here to search
      </SearchBox>
      <TaskSlot $w={48}>
        <svg width="16" height="16" viewBox="0 0 16 16"><circle cx="8" cy="8" r="6.500" fill="none" stroke="#fff" strokeWidth="2.500" /></svg>
      </TaskSlot>
      <TaskSlot $w={47}>
        <svg width="16" height="15" viewBox="0 0 16 15" fill="none" stroke="#fff">
          <path d="M0 0.500H11M0 14.500H11" />
          <rect x="1.500" y="3.500" width="8" height="8" />
          <path d="M14 1V5M14 6.500V9" strokeWidth="2" />
        </svg>
      </TaskSlot>
      <TaskSlot $w={56}><EdgeIcon /></TaskSlot>
      <TaskSlot $w={40}><FolderIcon /></TaskSlot>
      <TaskSlot $w={6} />
      <TaskSlot $w={48} $active><ExcelLogo /></TaskSlot>
      <Tray>
        <svg width="13" height="8" viewBox="0 0 13 8" fill="none" stroke="#fff" strokeWidth="1.200"><path d="M1 7.500L6.500 1.500L12 7.500" /></svg>
        <QatSlot $w={10} />
        <svg width="16" height="16" viewBox="0 0 16 16">
          <rect x="1" y="4" width="13" height="11" fill="#2f6fa8" stroke="#dfe8f0" />
          <path d="M3 1.500H12M1 3H14" stroke="#fff" />
          <path d="M3 8H11M3 11H8" stroke="#fff" />
          <circle cx="13" cy="13" r="2.500" fill="#47c46e" />
        </svg>
        <QatSlot $w={7} />
        <svg width="17" height="16" viewBox="0 0 17 16" fill="none" stroke="#fff">
          <rect x="4.500" y="1.500" width="12" height="9" />
          <rect x="0.500" y="0.500" width="6" height="6" fill="#0b141b" />
          <path d="M10.500 11V14M7 14.500H14" />
        </svg>
        <QatSlot $w={8} />
        ENG
      </Tray>
    </Taskbar>
  </Page>
);

export default App;
